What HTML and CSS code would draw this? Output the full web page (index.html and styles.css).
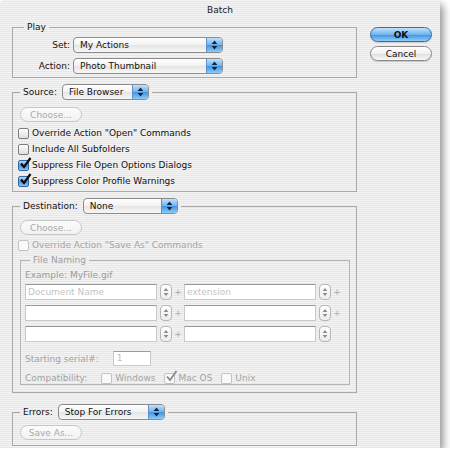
FILE: index.html
```html
<!DOCTYPE html>
<html lang="en">
<head>
  <meta charset="UTF-8">
  <title>Batch</title>
  <link rel="stylesheet" href="styles.css">
</head>
<body>
  <div class="window">
    <div class="titlebar">Batch</div>

    <div class="dialog">
      <div class="main">

        <!-- Play -->
        <fieldset class="group play">
          <legend>Play</legend>
          <div class="play-body">
            <div class="field-row">
              <span class="row-label">Set:</span>
              <div class="popup w-play">
                <span class="popup-text">My Actions</span>
                <span class="arrows"><svg width="7" height="10" viewBox="0 0 7 10"><path d="M3.5 0.5L6.3 4H0.7Z M3.5 9.5L6.3 6H0.7Z" fill="#13243a"/></svg></span>
              </div>
            </div>
            <div class="field-row">
              <span class="row-label">Action:</span>
              <div class="popup w-play">
                <span class="popup-text">Photo Thumbnail</span>
                <span class="arrows"><svg width="7" height="10" viewBox="0 0 7 10"><path d="M3.5 0.5L6.3 4H0.7Z M3.5 9.5L6.3 6H0.7Z" fill="#13243a"/></svg></span>
              </div>
            </div>
          </div>
        </fieldset>

        <!-- Source -->
        <fieldset class="group source">
          <legend>
            <span class="legend-row">
              <span>Source:</span>
              <span class="popup w-source">
                <span class="popup-text">File Browser</span>
                <span class="arrows"><svg width="7" height="10" viewBox="0 0 7 10"><path d="M3.5 0.5L6.3 4H0.7Z M3.5 9.5L6.3 6H0.7Z" fill="#13243a"/></svg></span>
              </span>
            </span>
          </legend>
          <div class="source-body">
            <button class="pill disabled">Choose...</button>
            <div class="check first">
              <span class="box"></span>Override Action "Open" Commands
            </div>
            <div class="check">
              <span class="box"></span>Include All Subfolders
            </div>
            <div class="check">
              <span class="box checked"><svg class="tick" width="13" height="13" viewBox="0 0 13 13"><path d="M2 6.5L5 10L11.5 1" fill="none" stroke="#0d0d0d" stroke-width="2.2"/></svg></span>Suppress File Open Options Dialogs
            </div>
            <div class="check">
              <span class="box checked"><svg class="tick" width="13" height="13" viewBox="0 0 13 13"><path d="M2 6.5L5 10L11.5 1" fill="none" stroke="#0d0d0d" stroke-width="2.2"/></svg></span>Suppress Color Profile Warnings
            </div>
          </div>
        </fieldset>

        <!-- Destination -->
        <fieldset class="group destination">
          <legend>
            <span class="legend-row">
              <span>Destination:</span>
              <span class="popup w-dest">
                <span class="popup-text">None</span>
                <span class="arrows"><svg width="7" height="10" viewBox="0 0 7 10"><path d="M3.5 0.5L6.3 4H0.7Z M3.5 9.5L6.3 6H0.7Z" fill="#13243a"/></svg></span>
              </span>
            </span>
          </legend>
          <div class="dest-body">
            <button class="pill disabled">Choose...</button>
            <div class="check off">
              <span class="box"></span>Override Action "Save As" Commands
            </div>

            <fieldset class="group naming">
              <legend>File Naming</legend>
              <div class="naming-body">
                <div class="example">Example: MyFile.gif</div>

                <div class="name-row first">
                  <span class="text-field">Document Name</span>
                  <span class="stepper"><svg width="6" height="10" viewBox="0 0 6 10"><path d="M3 1L5.4 4H0.6Z M3 9L5.4 6H0.6Z" fill="#8c8c8c"/></svg></span>
                  <span class="plus">+</span>
                  <span class="text-field">extension</span>
                  <span class="stepper"><svg width="6" height="10" viewBox="0 0 6 10"><path d="M3 1L5.4 4H0.6Z M3 9L5.4 6H0.6Z" fill="#8c8c8c"/></svg></span>
                  <span class="plus">+</span>
                </div>
                <div class="name-row">
                  <span class="text-field"></span>
                  <span class="stepper"><svg width="6" height="10" viewBox="0 0 6 10"><path d="M3 1L5.4 4H0.6Z M3 9L5.4 6H0.6Z" fill="#8c8c8c"/></svg></span>
                  <span class="plus">+</span>
                  <span class="text-field"></span>
                  <span class="stepper"><svg width="6" height="10" viewBox="0 0 6 10"><path d="M3 1L5.4 4H0.6Z M3 9L5.4 6H0.6Z" fill="#8c8c8c"/></svg></span>
                  <span class="plus">+</span>
                </div>
                <div class="name-row">
                  <span class="text-field"></span>
                  <span class="stepper"><svg width="6" height="10" viewBox="0 0 6 10"><path d="M3 1L5.4 4H0.6Z M3 9L5.4 6H0.6Z" fill="#8c8c8c"/></svg></span>
                  <span class="plus">+</span>
                  <span class="text-field"></span>
                  <span class="stepper"><svg width="6" height="10" viewBox="0 0 6 10"><path d="M3 1L5.4 4H0.6Z M3 9L5.4 6H0.6Z" fill="#8c8c8c"/></svg></span>
                </div>

                <div class="serial-row">
                  <span>Starting serial#:</span>
                  <span class="serial-field">1</span>
                </div>

                <div class="compat-row">
                  <span class="compat-label">Compatibility:</span>
                  <span class="check off inline"><span class="box"></span>Windows</span>
                  <span class="check off inline"><span class="box plain"><svg class="tick" width="13" height="13" viewBox="0 0 13 13"><path d="M2 6.5L5 10L11.5 1" fill="none" stroke="#8a8a8a" stroke-width="1.8"/></svg></span>Mac OS</span>
                  <span class="check off inline"><span class="box"></span>Unix</span>
                </div>
              </div>
            </fieldset>
          </div>
        </fieldset>

        <!-- Errors -->
        <fieldset class="group errors">
          <legend>
            <span class="legend-row">
              <span>Errors:</span>
              <span class="popup w-errors">
                <span class="popup-text">Stop For Errors</span>
                <span class="arrows"><svg width="7" height="10" viewBox="0 0 7 10"><path d="M3.5 0.5L6.3 4H0.7Z M3.5 9.5L6.3 6H0.7Z" fill="#13243a"/></svg></span>
              </span>
            </span>
          </legend>
          <div class="errors-body">
            <button class="pill disabled">Save As...</button>
          </div>
        </fieldset>

      </div>

      <div class="actions">
        <button class="pill default">OK</button>
        <button class="pill">Cancel</button>
      </div>
    </div>
  </div>
</body>
</html>
```

FILE: styles.css
```css
body {
  margin: 0;
  background: #fff;
  font-family: "DejaVu Sans", sans-serif;
  font-size: 9px;
  color: #111;
}

.window {
  width: 440px;
  height: 448px;
  border-radius: 5px 5px 0 0;
  background: repeating-linear-gradient(#f3f3f3 0 1px, #e7e7e7 1px 2px);
  box-shadow: 3px 4px 8px rgba(0, 0, 0, 0.45);
}

.titlebar {
  height: 20px;
  line-height: 20px;
  text-align: center;
  color: #1a1a1a;
}

.dialog {
  display: flex;
  padding: 1px 0 0 12px;
}

.main {
  width: 345px;
  display: flex;
  flex-direction: column;
}

/* group boxes */

.group {
  margin: 0;
  padding: 0;
  border: 1px solid #a8a8a8;
  min-width: 0;
}

.group legend {
  padding: 0 3px;
  margin-left: 7px;
  line-height: 12px;
}

.legend-row {
  display: flex;
  align-items: center;
  gap: 5px;
}

.play legend {
  margin-left: 11px;
}

.source {
  margin-top: 6px;
}

.destination {
  margin-top: 6px;
}

.errors {
  margin-top: 11px;
}

.play-body {
  display: flex;
  flex-direction: column;
  gap: 5px;
  padding: 4px 0 3px 0;
}

.field-row {
  display: flex;
  align-items: center;
}

.row-label {
  width: 57px;
  margin-right: 3px;
  text-align: right;
}

/* popup menus */

.popup {
  display: flex;
  align-items: center;
  height: 16px;
  box-sizing: border-box;
  border: 1px solid #8c8c8c;
  border-radius: 4px;
  background: linear-gradient(#ffffff, #f1f1f1 50%, #e4e4e4 51%, #f7f7f7);
  overflow: hidden;
}

.popup-text {
  flex: 1;
  padding-left: 6px;
  line-height: 14px;
}

.arrows {
  width: 15px;
  height: 100%;
  display: flex;
  align-items: center;
  justify-content: center;
  border-left: 1px solid #5f8fc4;
  background: linear-gradient(#bfe0fb, #6cb2f0 50%, #3e93e4 51%, #8dcaf7);
}

.w-play { width: 150px; }
.w-source { width: 87px; }
.w-dest { width: 95px; }
.w-errors { width: 107px; }

/* pill buttons */

.pill {
  display: block;
  width: 62px;
  height: 15px;
  padding: 0;
  font-family: inherit;
  font-size: 9px;
  color: #111;
  border: 1px solid #8a8a8a;
  border-radius: 8px;
  background: linear-gradient(#ffffff, #f0f0f0 50%, #dedede 51%, #f8f8f8);
  box-shadow: 0 1px 1px rgba(0, 0, 0, 0.15);
}

.pill.default {
  font-weight: bold;
  border-color: #3b6b9e;
  background: linear-gradient(#c4e2fb, #6fb4ef 50%, #3d92e2 51%, #8fcdf8);
}

.pill.disabled {
  color: #a9a9a9;
  border-color: #c6c6c6;
  background: linear-gradient(#fbfbfb, #f2f2f2);
  box-shadow: none;
}

.actions {
  margin-left: 13px;
  padding-top: 6px;
  display: flex;
  flex-direction: column;
  gap: 4px;
}

/* source */

.source-body {
  padding: 7px 0 2px 7px;
}

.check {
  display: flex;
  align-items: center;
  height: 16px;
  margin-left: -2px;
}

.check.first {
  margin-top: 3px;
}

.box {
  position: relative;
  width: 11px;
  height: 11px;
  box-sizing: border-box;
  margin-right: 3px;
  border: 1px solid #7f7f7f;
  border-radius: 2px;
  background: linear-gradient(#ffffff, #dedede);
}

.box.checked {
  border-color: #35679c;
  background: linear-gradient(#b9dcfa, #4c9ae6 55%, #8ac6f5);
}

.tick {
  position: absolute;
  left: 0;
  top: -4px;
}

.check.off {
  color: #a4a4a4;
}

.check.off .box {
  border-color: #c2c2c2;
  background: #f9f9f9;
}

/* destination */

.dest-body {
  padding: 6px 0 7px 7px;
}

.dest-body .check {
  margin-top: 2px;
}

.naming {
  width: 330px;
  box-sizing: border-box;
  margin-top: 1px;
  border-color: #b4b4b4;
  color: #a0a0a0;
}

.naming legend {
  margin-left: 9px;
}

.naming-body {
  padding: 3px 0 0 4px;
}

.example {
  line-height: 12px;
  color: #9a9a9a;
}

.name-row {
  display: flex;
  align-items: center;
  height: 16px;
  margin-top: 5px;
}

.name-row.first {
  margin-top: 3px;
}

.text-field {
  width: 132px;
  height: 16px;
  box-sizing: border-box;
  padding-left: 2px;
  line-height: 14px;
  color: #c3c3c3;
  border: 1px solid #c9c9c9;
  border-top-color: #979797;
  background: #fff;
}

.stepper {
  width: 12px;
  height: 16px;
  box-sizing: border-box;
  margin-left: 3px;
  display: flex;
  align-items: center;
  justify-content: center;
  border: 1px solid #b6b6b6;
  border-radius: 4px;
  background: linear-gradient(#ffffff, #ececec);
}

.plus {
  width: 12px;
  text-align: center;
  color: #aaa;
}

.serial-row {
  display: flex;
  align-items: center;
  margin-top: 9px;
  color: #a2a2a2;
}

.serial-field {
  width: 38px;
  height: 15px;
  box-sizing: border-box;
  margin-left: 14px;
  padding-left: 3px;
  line-height: 13px;
  color: #c0c0c0;
  border: 1px solid #c9c9c9;
  border-top-color: #999;
  background: #fff;
}

.compat-row {
  display: flex;
  align-items: center;
  height: 12px;
  margin-top: 6px;
  color: #a2a2a2;
}

.compat-label {
  margin-right: 14px;
}

.check.inline {
  height: 12px;
  margin: 0 9px 0 0;
}

/* errors */

.errors-body {
  padding: 5px 0 5px 7px;
}
```
